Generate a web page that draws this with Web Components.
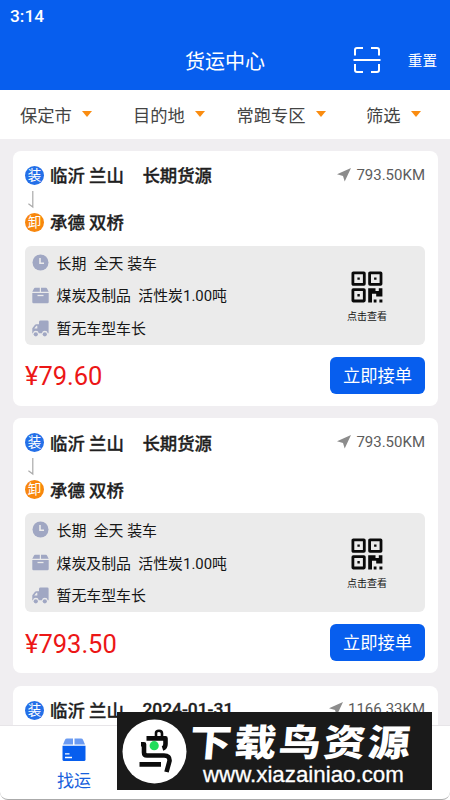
<!DOCTYPE html>
<html lang="zh-CN">
<head>
<meta charset="utf-8">
<title>货运中心</title>
<style>
html,body{margin:0;height:100%;overflow:hidden;background:#fff}
body{font-family:Roboto,"Noto Sans CJK SC",sans-serif}
</style>
</head>
<body>
<freight-app></freight-app>
<script>
const define = (name, html, fill) => customElements.define(name, class extends HTMLElement {
  connectedCallback() {
    if (this.shadowRoot) return;
    const t = document.createElement('template');
    t.innerHTML = html;
    this.attachShadow({mode: 'open'}).append(t.content.cloneNode(true));
    if (fill) fill(this, this.shadowRoot);
  }
});

define('app-header', `<style>
:host{display:flex;flex-direction:column;height:90px;background:#075eee;color:#fff;flex:none}
.status{height:31px;line-height:33px;padding-left:10px;font-size:17.3px;font-weight:500;box-sizing:border-box}
.bar{flex:1;display:grid;grid-template-columns:1fr auto 1fr;align-items:center}
.title{grid-column:2;font-size:20px;line-height:56px;padding-top:3px}
.right{display:flex;align-items:center;justify-content:flex-end;gap:27px;padding-right:13px;font-size:14.6px}
.right span{padding-bottom:2px}
svg{display:block}
</style>
<div class="status">3:14</div>
<div class="bar"><span class="title">货运中心</span>
<div class="right"><svg width="28" height="28" viewBox="0 0 28 28" fill="none" stroke="#fff" stroke-width="2"><path d="M2 8.5V3Q2 1 4 1H10M18 1H24Q26 1 26 3V8.5M2 17V23Q2 25 4 25H10M18 25H24Q26 25 26 23V17M.5 13H27.5"/></svg><span>重置</span></div></div>`);

define('filter-item', `<style>
:host{display:flex;align-items:center;gap:10px;font-size:17.3px;color:#444;white-space:nowrap}
span{padding-top:1px}
i{width:0;height:0;border:5.2px solid transparent;border-top:6px solid #fa8c10;border-bottom:0}
</style><span><slot></slot></span><i></i>`);

define('filter-bar', `<style>
:host{display:grid;grid-template-columns:113px 103.5px 129.5px auto;align-items:center;height:49px;padding-left:20px;box-sizing:border-box;padding-bottom:1px;background:#fff;flex:none}
</style>
<filter-item>保定市</filter-item><filter-item>目的地</filter-item><filter-item>常跑专区</filter-item><filter-item>筛选</filter-item>`);

define('stop-badge', `<style>
:host{display:flex;align-items:center;justify-content:center;width:19px;height:19px;border-radius:50%;color:#fff;font-size:13.5px;font-weight:400;line-height:19px;background:var(--tone);flex:none;-webkit-text-stroke:0}
</style><slot></slot>`);

const ICONS = {
  clock: '<circle cx="8.5" cy="8.5" r="8"/><path d="M8 4V9.2H12" fill="none" stroke="#ebebeb" stroke-width="1.6"/>',
  box: '<path d="M3 .8H7.8V4.8H.3L2 1.4Q2.3.8 3 .8ZM9 .8H14Q14.7.8 15 1.4L16.7 4.8H9ZM.3 6H16.7V15Q16.7 16.2 15.5 16.2H1.5Q.3 16.2.3 15Z"/><path d="M5.5 8.5H11.5" stroke="#ebebeb" stroke-width="1.3"/>',
  truck: '<path d="M8.5.5H15.3Q16.6.5 16.6 1.8V13.3H15.8A3 3 0 0 0 9.9 13.3H6.8A3 3 0 0 0 .9 13.3H.3V8.3L3 4.8Q3.5 4.2 4.3 4.2H7V1.8Q7.2.5 8.5.5Z"/><path d="M2.2 8.5 4.4 5.8H5.3V8.5Z" fill="#ebebeb"/><circle cx="3.8" cy="14.3" r="2.1"/><circle cx="12.8" cy="14.3" r="2.1"/>'
};
define('info-line', `<style>
:host{display:flex;align-items:center;gap:7.5px;height:32.7px;font-size:14.9px;color:#161616;white-space:pre}
svg{fill:#a0a7c3;flex:none}
span{padding-bottom:1px}
</style><svg width="17" height="17" viewBox="0 0 17 17"></svg><span><slot></slot></span>`,
(el, root) => root.querySelector('svg').innerHTML = ICONS[el.getAttribute('icon')]);

define('qr-link', `<style>
:host{display:flex;flex-direction:column;align-items:center;gap:6px;padding-top:4px;font-size:10px;line-height:15px;color:#161616;width:42px}
svg{display:block}
</style>
<svg width="32" height="32" viewBox="0 0 32 32"><g fill="none" stroke="#0a0a0a" stroke-width="2.8"><rect x="1.9" y="1.9" width="11.4" height="11.4" rx=".4"/><rect x="18.6" y="1.9" width="11.4" height="11.4" rx=".4"/><rect x="1.9" y="18.6" width="11.4" height="11.4" rx=".4"/></g><path fill="#0a0a0a" d="M6.4 6.4h2.4v2.4H6.4zM23.1 6.4h2.4v2.4h-2.4zM6.4 23.1h2.4v2.4H6.4zM17.2 17.2H24.5V20H27.8V17.2H31.4V25.5H25.2V22.7H21V31.4H17.2ZM22.7 28.4h2.8v3h-2.8zM28.4 28.4h3v3h-3z"/></svg><span>点击查看</span>`);

define('cargo-card', `<style>
:host{display:flex;flex-direction:column;height:254.5px;box-sizing:border-box;padding:15px 12.5px 11.5px;background:#fff;border-radius:8px;flex:none}
:host([preview]) :is(.arrow,.unload,.info,.foot){display:none}
.row{display:flex;align-items:center;height:19px;gap:6px;font-size:17.4px;font-weight:500;-webkit-text-stroke:.3px;color:#202020;white-space:nowrap}
.row>span{padding-bottom:1.5px}
.tag{margin-left:12.5px}
.dist{margin-left:auto;display:flex;align-items:center;gap:5px;font-size:15px;font-weight:400;-webkit-text-stroke:0;color:#5c5c5c}
.arrow{height:28px;padding-left:2px}
.arrow svg{display:block}
.info{display:flex;justify-content:space-between;align-items:center;margin-top:14px;padding:0 37px 0 7px;height:98.5px;background:#ebebeb;border-radius:6px}
.foot{display:flex;align-items:center;justify-content:space-between;margin-top:12.5px;height:36.5px}
.price{font-size:25.5px;color:#ec1616;padding-top:2px}
button{all:unset;width:95px;height:36.5px;border-radius:6px;background:#075eee;color:#fff;font-size:17.3px;line-height:38px;text-align:center}
</style>
<div class="row"><stop-badge style="--tone:#2470e8">装</stop-badge><span>临沂 兰山</span><span class="tag"></span>
<span class="dist"><svg width="14" height="14" viewBox="0 0 14 14"><path d="M0 6.2 14 0 7.7 13.6 6 8Z" fill="#8c8c8c"/></svg><span class="km"></span></span></div>
<div class="arrow"><svg width="10" height="28" viewBox="0 0 10 28"><path d="M5.8 6V22L1.4 18.8" fill="none" stroke="#aaa" stroke-width="1.2"/></svg></div>
<div class="row unload"><stop-badge style="--tone:#f8870d">卸</stop-badge><span>承德 双桥</span></div>
<div class="info"><div><info-line icon="clock">长期  全天 装车</info-line><info-line icon="box">煤炭及制品  活性炭1.00吨</info-line><info-line icon="truck">暂无车型车长</info-line></div><qr-link></qr-link></div>
<div class="foot"><span class="price"></span><button>立即接单</button></div>`,
(el, root) => {
  root.querySelector('.tag').textContent = el.getAttribute('tag');
  root.querySelector('.km').textContent = el.getAttribute('km') + 'KM';
  root.querySelector('.price').textContent = '¥' + el.getAttribute('price');
});

define('tab-bar', `<style>
:host{display:flex;height:75.5px;box-sizing:border-box;background:#fff;border-top:1px solid #e7e5e8;border-bottom:1px solid #aaa;border-radius:0 0 8px 8px;flex:none;padding-left:57px;z-index:1}
.tab{display:flex;flex-direction:column;align-items:center;color:#1760dc;font-size:17px;line-height:24px;padding-top:12px;gap:7px}
svg{display:block}
</style>
<div class="tab"><svg width="24" height="24" viewBox="0 0 24 24"><path d="M5 .5H11V6.5H1L3 1.7Q3.5.5 5 .5ZM12.5.5H19Q20.5.5 21 1.7L23 6.5H12.5Z" fill="#6b9bf2"/><path d="M.5 7.8H23.5V21.5Q23.5 23 22 23H2Q.5 23 .5 21.5Z" fill="#075eee"/><path d="M3 15.8H7.5M3 19.5H10" stroke="#fff" stroke-width="1.3"/></svg><span>找运</span></div>`);

define('site-mark', `<style>
:host{position:absolute;left:117px;top:712px;width:315px;height:78px;box-sizing:border-box;background:#1a1a1a;display:flex;align-items:center;gap:3px;padding-left:5px;color:#fff;z-index:2}
.words{display:flex;flex-direction:column;white-space:nowrap}
.name{font:900 42px/46px "Noto Sans CJK SC",sans-serif;transform:skewX(-5deg) scaleY(.88);letter-spacing:2.6px;margin-top:2px}
.url{font:22.3px/26px "Liberation Sans",sans-serif;padding-left:13px;-webkit-text-stroke:.3px #fff;margin-top:-1px}
svg{display:block;flex:none}
</style>
<svg width="65" height="65" viewBox="0 0 65 65"><circle cx="32.5" cy="32.5" r="32" fill="#fff"/><g fill="none" stroke="#0c0c0c" stroke-width="4.6" stroke-linejoin="round"><path d="M24.5 19.4H43.5V25Q43.5 28.5 40.5 29.5M19 25.2H22V33.5Q22 36.5 25 36.5H42Q48 36.5 47.5 42L44.5 53M17.5 45.4H39"/><path d="M34 18V14Q34 11.7 37 11.7Q40 11.7 40 14.5V18" stroke-width="2.6"/></g><circle cx="32.2" cy="26.7" r="4.6" fill="#20dc5b"/></svg>
<div class="words"><span class="name">下载鸟资源</span><span class="url">www.xiazainiao.com</span></div>`);

define('freight-app', `<style>
:host{display:flex;flex-direction:column;width:450px;height:800px;overflow:hidden;position:relative;background:#fff}
main{flex:1;min-height:0;overflow:hidden;background:#f0eef1;display:flex;flex-direction:column;gap:12.7px;padding:12.2px 12.5px 0}
</style>
<app-header></app-header><filter-bar></filter-bar>
<main>
<cargo-card tag="长期货源" km="793.50" price="79.60"></cargo-card>
<cargo-card tag="长期货源" km="793.50" price="793.50"></cargo-card>
<cargo-card preview tag="2024-01-31" km="1166.33" price="793.50"></cargo-card>
</main>
<tab-bar></tab-bar><site-mark></site-mark>`);
</script>
</body>
</html>
